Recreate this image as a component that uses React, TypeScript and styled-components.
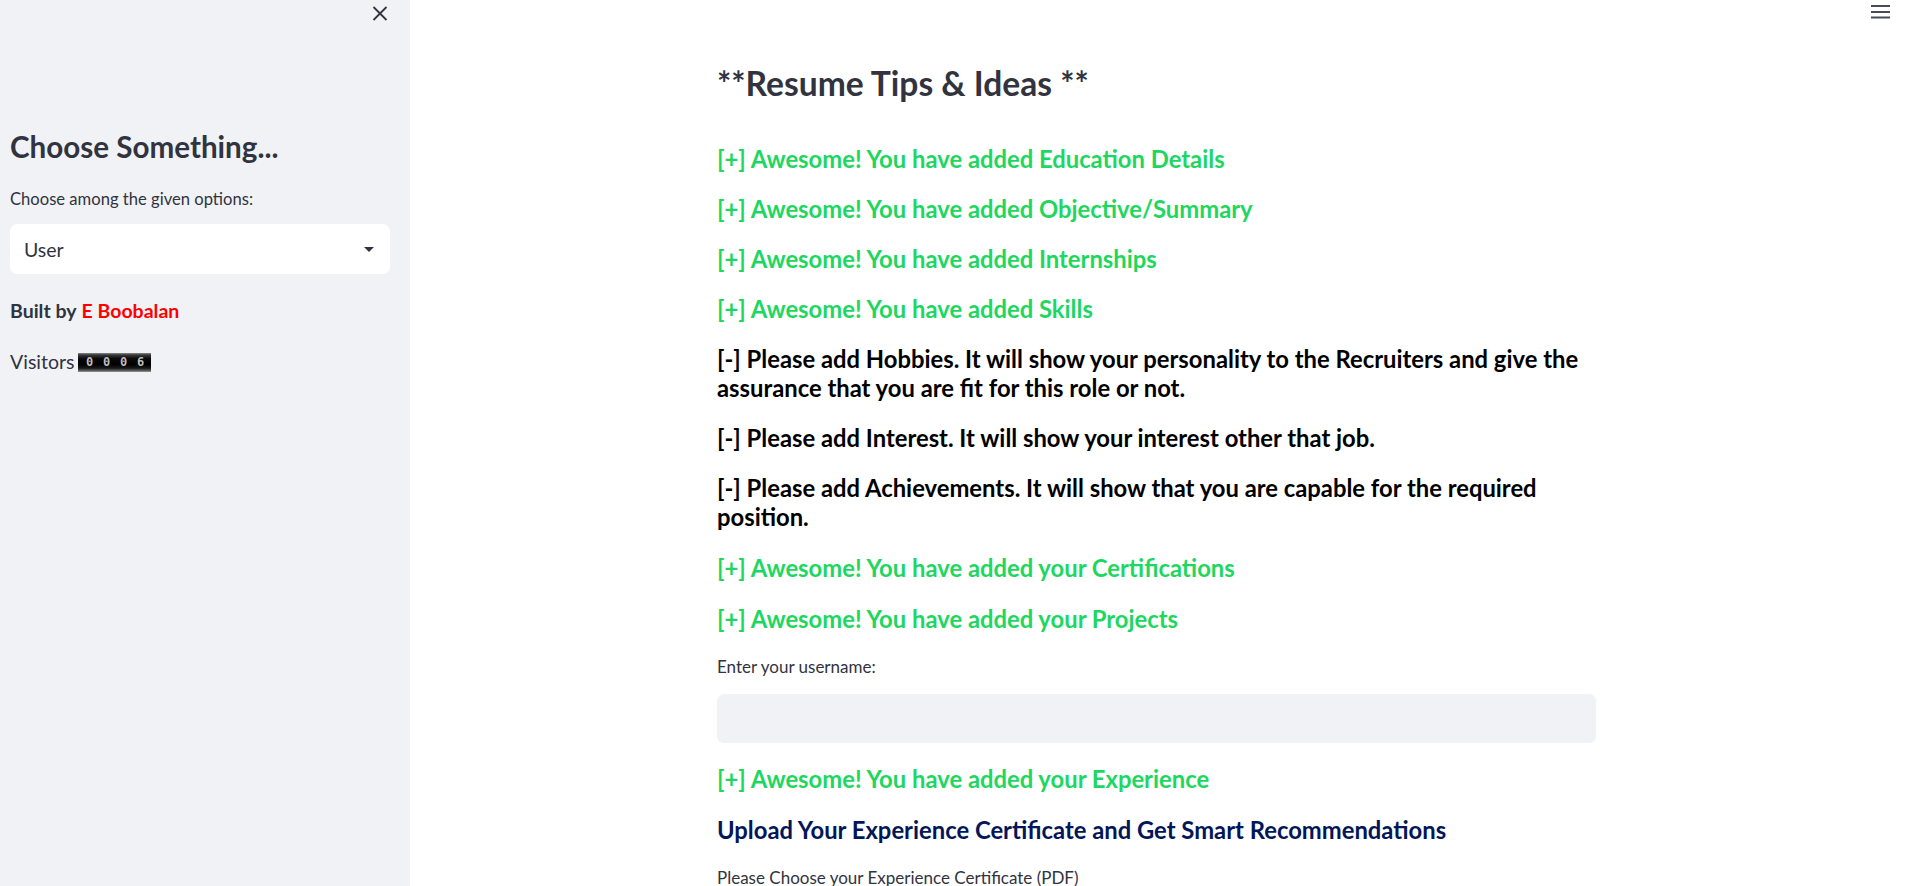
import React from "react";
import styled, { createGlobalStyle } from "styled-components";

const Global = createGlobalStyle`
  html, body { margin: 0; padding: 0; background: #ffffff; }
  body { font-family: "Source Sans Pro", Lato, "Noto Sans", sans-serif; color: #31333f; overflow: hidden; }
  * { box-sizing: border-box; }
`;

const Page = styled.div`
  display: flex;
  width: 1909px;
  height: 886px;
  overflow: hidden;
`;

const Sidebar = styled.aside`
  width: 410px;
  flex: 0 0 410px;
  background: #f0f2f6;
  display: flex;
  flex-direction: column;
  padding: 0 20px 0 10px;
`;

const SideTop = styled.div`
  display: flex;
  justify-content: flex-end;
  padding: 6px 2px 0 0;
  height: 24px;
`;

const IconButton = styled.button`
  border: 0;
  background: transparent;
  padding: 0;
  width: 16px;
  height: 15px;
  display: flex;
  color: #31333f;
  cursor: pointer;
`;

const SideHeading = styled.h2`
  margin: 104px 0 0;
  font-size: 29.6px;
  line-height: 38px;
  font-weight: 700;
  color: #31333f;
`;

const WidgetLabel = styled.label`
  display: block;
  font-size: 16.6px;
  line-height: 24px;
  color: #31333f;
  margin-top: 21px;
`;

const SelectBox = styled.div`
  margin-top: 13px;
  height: 50px;
  background: #ffffff;
  border-radius: 7px;
  display: flex;
  align-items: center;
  justify-content: space-between;
  padding: 0 16px 0 14px;
  font-size: 19.5px;
  color: #31333f;
`;

const Caret = styled.span`
  width: 0;
  height: 0;
  border-left: 5px solid transparent;
  border-right: 5px solid transparent;
  border-top: 5px solid #31333f;
  margin-top: 1px;
`;

const SideText = styled.p<{ $mt: number; $bold?: boolean }>`
  margin: ${(p) => p.$mt}px 0 0;
  font-size: 19.5px;
  line-height: 26px;
  color: #31333f;
  font-weight: ${(p) => (p.$bold ? 700 : 400)};
  display: flex;
  align-items: center;
`;

const Author = styled.span`
  color: #ff0000;
  margin-left: 5px;
`;

const Counter = styled.span`
  display: inline-flex;
  margin-left: 3px;
  height: 19px;
  width: 73px;
  background: linear-gradient(#8a8a8a 0, #3a3a3a 10%, #0a0a0a 30%, #000 60%, #1a1a1a 80%, #5a5a5a 92%, #9a9a9a 100%);
  align-items: center;
  justify-content: space-between;
  padding: 0 5px 0 7px;
`;

const Digit = styled.span`
  font-family: "DejaVu Sans Mono", "Liberation Mono", monospace;
  font-size: 12px;
  font-weight: 700;
  color: #bdbdbd;
  line-height: 13px;
  width: 10px;
  text-align: center;
  text-shadow: 0 0 1px #000;
`;

const Main = styled.main`
  flex: 1;
  display: flex;
  flex-direction: column;
  padding-right: 6px;
`;

const TopBar = styled.header`
  height: 24px;
  display: flex;
  justify-content: flex-end;
  padding: 5px 13px 0 0;
`;

const Content = styled.div`
  width: 879px;
  margin: 0 auto;
  padding-top: 42px;
  display: flex;
  flex-direction: column;
`;

const Title = styled.h3`
  margin: 0 0 19px;
  font-size: 33.6px;
  line-height: 44px;
  font-weight: 700;
  color: #31333f;
`;

const Tip = styled.h4<{ $color: string; $mt?: number }>`
  margin: ${(p) => p.$mt ?? 21}px 0 0;
  font-size: 23.8px;
  line-height: 29px;
  font-weight: 700;
  color: ${(p) => p.$color};
`;

const InputLabel = styled.label`
  display: block;
  margin-top: 21px;
  font-size: 17px;
  line-height: 24px;
  color: #31333f;
`;

const TextInput = styled.input`
  margin-top: 15px;
  height: 49px;
  width: 100%;
  border: 0;
  border-radius: 7px;
  background: #f0f2f6;
  outline: none;
  padding: 0 14px;
  font-size: 19.5px;
  font-family: inherit;
`;

const UploadLabel = styled.label`
  display: block;
  margin-top: 21px;
  font-size: 17px;
  line-height: 24px;
  color: #31333f;
`;

const GREEN = "#1ed760";
const BLACK = "#000000";
const NAVY = "#021659";

export default function App() {
  return (
    <>
      <Global />
      <Page>
        <Sidebar>
          <SideTop>
            <IconButton aria-label="close">
              <svg width="16" height="15" viewBox="0 0 16 15">
                <path d="M1.5 1 L14.5 14 M14.5 1 L1.5 14" stroke="#31333f" strokeWidth="1.8" fill="none" />
              </svg>
            </IconButton>
          </SideTop>
          <SideHeading>Choose Something...</SideHeading>
          <WidgetLabel>Choose among the given options:</WidgetLabel>
          <SelectBox>
            <span>User</span>
            <Caret />
          </SelectBox>
          <SideText $mt={24} $bold>
            Built by<Author>E Boobalan</Author>
          </SideText>
          <SideText $mt={25}>
            Visitors
            <Counter>
              <Digit>0</Digit>
              <Digit>0</Digit>
              <Digit>0</Digit>
              <Digit>6</Digit>
            </Counter>
          </SideText>
        </Sidebar>
        <Main>
          <TopBar>
            <svg width="19" height="14" viewBox="0 0 19 14">
              <path d="M0 1 H19 M0 7 H19 M0 12.5 H19" stroke="#4a4c55" strokeWidth="2" />
            </svg>
          </TopBar>
          <Content>
            <Title>**Resume Tips &amp; Ideas **</Title>
            <Tip $color={GREEN}>[+] Awesome! You have added Education Details</Tip>
            <Tip $color={GREEN}>[+] Awesome! You have added Objective/Summary</Tip>
            <Tip $color={GREEN}>[+] Awesome! You have added Internships</Tip>
            <Tip $color={GREEN}>[+] Awesome! You have added Skills</Tip>
            <Tip $color={BLACK}>
              [-] Please add Hobbies. It will show your personality to the Recruiters and give the assurance that you are fit for this role or not.
            </Tip>
            <Tip $color={BLACK}>[-] Please add Interest. It will show your interest other that job.</Tip>
            <Tip $color={BLACK}>
              [-] Please add Achievements. It will show that you are capable for the required position.
            </Tip>
            <Tip $color={GREEN} $mt={22}>[+] Awesome! You have added your Certifications</Tip>
            <Tip $color={GREEN} $mt={22}>[+] Awesome! You have added your Projects</Tip>
            <InputLabel>Enter your username:</InputLabel>
            <TextInput type="text" />
            <Tip $color={GREEN} $mt={22}>[+] Awesome! You have added your Experience</Tip>
            <Tip $color={NAVY} $mt={22}>Upload Your Experience Certificate and Get Smart Recommendations</Tip>
            <UploadLabel>Please Choose your Experience Certificate (PDF)</UploadLabel>
          </Content>
        </Main>
      </Page>
    </>
  );
}
